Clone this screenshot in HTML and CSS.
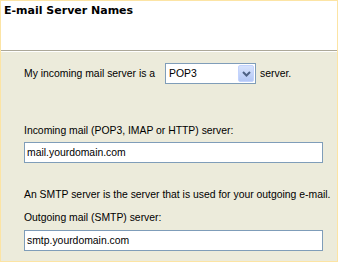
FILE: index.html
```html
<!DOCTYPE html>
<html lang="en">

<head>
  <meta charset="UTF-8" />
  <title>E-mail Server Names</title>
  <link rel="stylesheet" href="styles.css">
</head>

<body>
  <div class="wizard">
    <div class="header">
      <p class="title">E-mail Server Names</p>
    </div>

    <div class="page">
      <div class="type_row">
        <span>My incoming mail server is a</span>
        <div class="select">
          <span class="select__value">POP3</span>
          <span class="select__btn">
            <svg width="9" height="6" viewBox="0 0 9 6">
              <path d="M1 1 L4.5 4.5 L8 1" fill="none" stroke="#4d6185" stroke-width="2" />
            </svg>
          </span>
        </div>
        <span>server.</span>
      </div>

      <div class="field incoming">
        <label>Incoming mail (POP3, IMAP or HTTP) server:</label>
        <div class="textbox">mail.yourdomain.com</div>
      </div>

      <p class="note">An SMTP server is the server that is used for your outgoing e-mail.</p>

      <div class="field">
        <label>Outgoing mail (SMTP) server:</label>
        <div class="textbox">smtp.yourdomain.com</div>
      </div>
    </div>
  </div>
</body>

</html>
```

FILE: styles.css
```css
body {
  margin: 0;
  padding: 0;
  font-family: "Liberation Sans", Arial, sans-serif;
  font-size: 10.4px;
  line-height: 13px;
  color: #000;
}

.wizard {
  width: 338px;
  height: 262px;
  box-sizing: border-box;
  border: 1px solid #fce4a4;
  display: flex;
  flex-direction: column;
  background-color: #ecebdb;
}

.header {
  height: 49px;
  background-color: #fff;
  border-bottom: 1px solid #aca899;
  box-shadow: 0 1px 0 #fff;
}

.title {
  margin: 0;
  padding: 3px 0 0 3px;
  font-family: "DejaVu Sans", sans-serif;
  font-weight: bold;
  font-size: 11px;
}

.page {
  padding: 12px 0 0 23px;
}

.type_row {
  display: flex;
  align-items: center;
}

.select {
  display: flex;
  align-items: center;
  width: 89px;
  height: 19px;
  margin: 0 4px 0 10px;
  border: 1px solid #7f9db9;
  background-color: #fff;
}

.select__value {
  flex: 1;
  padding-left: 3px;
}

.select__btn {
  display: flex;
  align-items: center;
  justify-content: center;
  width: 16px;
  height: 17px;
  margin-right: 1px;
  border: 1px solid #c3d3fd;
  border-radius: 2px;
  background: linear-gradient(#d7e3fd, #b3c7f5);
  box-sizing: border-box;
}

.field label {
  display: block;
  margin-bottom: 5px;
}

.incoming {
  margin-top: 40px;
}

.textbox {
  width: 295px;
  height: 19px;
  line-height: 19px;
  padding-left: 2px;
  border: 1px solid #7f9db9;
  background-color: #fff;
}

.note {
  margin: 25px 0 10px 0;
  white-space: nowrap;
}

.field + .note + .field label {
  margin-bottom: 6px;
}
```
